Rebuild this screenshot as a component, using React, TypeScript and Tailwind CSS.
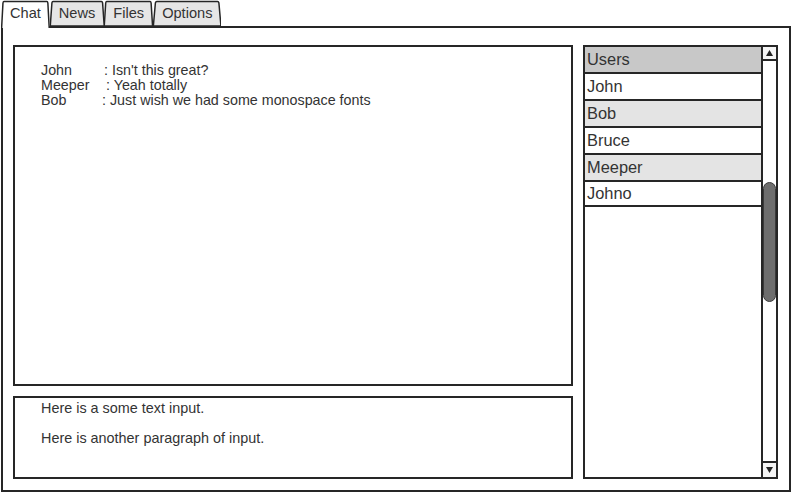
import type { ReactNode } from "react";

const tabs = [
  { label: "Chat", active: true },
  { label: "News", active: false },
  { label: "Files", active: false },
  { label: "Options", active: false },
];

const messages = [
  { who: "John", w: "w-[63px]", text: ": Isn't this great?" },
  { who: "Meeper", w: "w-[65px]", text: ": Yeah totally" },
  { who: "Bob", w: "w-[61px]", text: ": Just wish we had some monospace fonts" },
];

const users = [
  { name: "John", row: "h-[27px] bg-white leading-[25px]" },
  { name: "Bob", row: "h-[27px] bg-[#e4e4e4] leading-[25px]" },
  { name: "Bruce", row: "h-[27px] bg-white leading-[25px]" },
  { name: "Meeper", row: "h-[27px] bg-[#e4e4e4] leading-[25px]" },
  { name: "Johno", row: "h-[25px] bg-white leading-[23px]" },
];

function Tab({ label, active }: { label: string; active: boolean }) {
  return (
    <div className={`relative px-[9px] ${active ? "h-[28px] z-20" : "h-[26px]"}`}>
      {/* trapezoid tab shape */}
      <svg className="absolute inset-0 w-full h-full" preserveAspectRatio="none" viewBox="0 0 100 26">
        <path
          d={active ? "M1 28 L4 3 Q4.5 1.5 6 1.5 L94 1.5 Q95.5 1.5 96 3 L99 28" : "M0.5 26 L3.5 3 Q4 1.5 5.5 1.5 L94.5 1.5 Q96 1.5 96.5 3 L99.5 26 Z"}
          fill={active ? "#ffffff" : "#e6e6e6"}
          stroke="#262626"
          strokeWidth="1.5"
          vectorEffect="non-scaling-stroke"
        />
      </svg>
      <span className="relative block pt-[4px] text-[14.6px] leading-[18px] text-[#333]">{label}</span>
    </div>
  );
}

function Box({ className, children }: { className?: string; children?: ReactNode }) {
  return <div className={`border-2 border-[#262626] bg-white ${className ?? ""}`}>{children}</div>;
}

function ScrollBar() {
  return (
    <div className="absolute top-0 bottom-0 right-0 w-[15px] bg-white border-l-2 border-[#262626] flex flex-col">
      <div className="h-[14px] border-b-2 border-[#262626] bg-[#f4f4f4] flex items-center justify-center">
        <svg width="7" height="6" viewBox="0 0 7 6">
          <path d="M3.5 0 L7 6 L0 6 Z" fill="#222" />
        </svg>
      </div>
      <div className="flex-1 relative">
        <div className="absolute left-0 right-0 top-[121px] h-[120px] rounded-[7px] bg-[#6e6e6e] border border-[#3a3a3a]" />
      </div>
      <div className="h-[16px] border-t-2 border-[#262626] bg-[#f4f4f4] flex items-center justify-center">
        <svg width="7" height="6" viewBox="0 0 7 6">
          <path d="M0 0 L7 0 L3.5 6 Z" fill="#222" />
        </svg>
      </div>
    </div>
  );
}

export default function App() {
  return (
    <div className="w-[792px] h-[493px] bg-white overflow-hidden font-['Liberation_Sans',Arial,sans-serif] text-[#333]">
      <div className="relative z-10 flex items-start h-[26px] pl-[1px]">
        {tabs.map(t => (
          <Tab key={t.label} label={t.label} active={t.active} />
        ))}
      </div>

      <div className="mx-[1px] h-[466px] border-2 border-[#262626] flex gap-[10px] pt-[17px] pb-[11px] pl-[10px] pr-[11px]">
        <div className="w-[560px] flex flex-col gap-[10px]">
          <Box className="h-[341px] pt-[16px] pl-[26px]">
            {messages.map(m => (
              <div key={m.who} className="flex text-[14.3px] leading-[15px]">
                <span className={`${m.w} shrink-0`}>{m.who}</span>
                <span>{m.text}</span>
              </div>
            ))}
          </Box>
          <Box className="flex-1 pt-[2px] pl-[26px] text-[14.4px] leading-[16px]">
            <p className="mb-[14px]">Here is a some text input.</p>
            <p>Here is another paragraph of input.</p>
          </Box>
        </div>

        <Box className="relative w-[195px] overflow-hidden">
          <div className="h-[27px] bg-[#c8c8c8] border-b-2 border-[#262626] pl-[2px] text-[16.4px] leading-[25px]">Users</div>
          {users.map(u => (
            <div key={u.name} className={`${u.row} border-b-2 border-[#262626] pl-[2px] text-[16.4px]`}>
              {u.name}
            </div>
          ))}
          <ScrollBar />
        </Box>
      </div>
    </div>
  );
}
